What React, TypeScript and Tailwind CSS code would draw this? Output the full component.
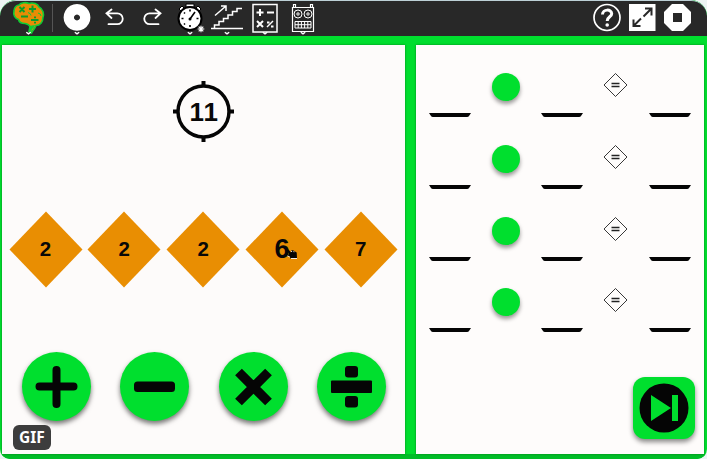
import type { ReactNode } from "react";

const Icon = ({ box, className, children }: { box: string; className: string; children: ReactNode }) => (
  <svg viewBox={box} className={`h-9 shrink-0 ${className}`} fill="none" stroke="#fff" strokeWidth="1.5">
    {children}
  </svg>
);

const Notch = ({ x }: { x: number }) => (
  <path d={`M${x - 2.2} 32.2 l2.2 1.7 2.2 -1.7`} stroke="#fff" strokeWidth="1.4" fill="none" />
);

function Toolbar() {
  return (
    <header className="flex h-9 shrink-0 rounded-t-2xl border-t border-[#bdd0d6] bg-[#282828]">
      <div className="-mt-px flex h-9 w-full">
        <Icon box="10 0 38 36" className="ml-2.5 w-[38px]">
          <path
            d="M14 11 C14 7 17 5 19 5 C21 2.5 26 2 29 3.5 C33 2 38 4 39 7 C43 9 44.5 14 42.8 18 C43 22 40 25.5 36 25.5 C35 29 32.5 30 31.5 33 L29 31.5 L30 26.5 C29 24.5 28 24 25 23.5 C21 23.5 19 22 18.5 19.5 C15 18.5 13 15 14 11 Z"
            fill="#e78c05"
            stroke="#0ecb35"
            strokeWidth="1.6"
          />
          <path
            d="M19.5 7 l5 5 m0 -5 l-5 5 M29 9 h7 m-3.5 -3.5 v7 M21 16.5 h7 M31 20 h7.5 M35 16.5 v1.7 m0 3.6 v1.7"
            stroke="#0c9e2a"
            strokeWidth="2"
          />
          <path d="M28 12.5 q3 1 3 3 M38 13 q3 .5 3 3" stroke="#0ecb35" strokeWidth="1" />
          <path d="M29 26 l6 -1 q-1 3 -3 4 l-1 4 -2 -2 z" fill="#0ecb35" stroke="none" />
          <Notch x={28.5} />
        </Icon>
        <div className="mt-1 ml-1 h-7 w-px bg-[#555]" />
        <Icon box="62 0 30 36" className="ml-[9px] w-[30px]">
          <path
            d="M77 4a13.4 13.4 0 1 0 .01 0zM77 14.5a3 3 0 1 1-.01 0z"
            fill="#fff"
            fillRule="evenodd"
            stroke="none"
          />
          <Notch x={77} />
        </Icon>
        <Icon box="100 0 30 36" className="ml-2 w-[30px]">
          <path d="M111.5 9.5 L106.5 13.3 L111.5 18 M106.5 13.3 H117.3 A5.4 5.4 0 0 1 117.3 24.2 H108.5" strokeWidth="1.8" strokeLinecap="round" />
        </Icon>
        <Icon box="138 0 30 36" className="ml-2 w-[30px]">
          <path d="M155.5 9.5 L160.5 13.3 L155.5 18 M160.5 13.3 H149.7 A5.4 5.4 0 0 0 149.7 24.2 H158.5" strokeWidth="1.8" strokeLinecap="round" />
        </Icon>
        <Icon box="175 0 32 36" className="ml-[7px] w-8">
          <path d="M186 4h8v3h-8zM179 9l3-3 2 2-3 3zM196 8l2-2 3 3-2 2z" fill="#fff" stroke="#000" strokeWidth="1" />
          <circle cx="190" cy="18.5" r="11.5" fill="#fff" stroke="#000" strokeWidth="2" />
          <path d="M190 19 L195 12 M190 9.5v2M190 25v2M181.5 18.5h2M196.5 18.5h2M184 12.5l1 1M184 24.5l1 -1" stroke="#000" strokeWidth="1.6" />
          <circle cx="190" cy="19" r="1.5" fill="#000" stroke="none" />
          <circle cx="201" cy="29" r="3.7" fill="#282828" stroke="none" />
          <path d="M201 25.7v6.6M197.7 29h6.6M198.7 26.7l4.6 4.6M203.3 26.7l-4.6 4.6" strokeWidth="1.1" />
          <Notch x={190} />
        </Icon>
        <Icon box="210 0 34 36" className="ml-[3px] w-[34px]">
          <path d="M211 28.5 H243 M214.5 28.5 V25 H219 V21.5 H223.5 V18.5 H228 V15 H232.5 V11.5 H237 V8.5 H242" />
          <path d="M215 15.5 L226 6 M221 6 H226 V11" />
          <Notch x={227} />
        </Icon>
        <Icon box="251 0 29 36" className="ml-[7px] w-[29px]">
          <rect x="253" y="4.5" width="24" height="27.5" />
          <path d="M256.5 12.5h7M260 9v7M267 12.5h7M257 21l6 6M263 21l-6 6" strokeWidth="2" />
          <path d="M267 27l6 -6" />
          <path d="M267 21.5h2.5v2h-2.5zM271 25.5h2.5v2h-2.5z" fill="#fff" stroke="none" />
          <Notch x={265} />
        </Icon>
        <Icon box="289 0 28 36" className="ml-[9px] w-7">
          <path d="M292.5 7.5h21v24h-21zM293.5 7v-2.5h2v3M310.5 7v-2.5h2v3" strokeWidth="1.2" />
          <circle cx="298" cy="14" r="4" strokeWidth="1" />
          <circle cx="308" cy="14" r="4" strokeWidth="1" />
          <circle cx="298" cy="14" r="1.2" strokeWidth="1" />
          <circle cx="308" cy="14" r="1.2" strokeWidth="1" />
          <path d="M295 21.5h16v6.5h-16zM295 24.7h16M298.2 21.5v6.5M301.4 21.5v6.5M304.6 21.5v6.5M307.8 21.5v6.5" strokeWidth="1" />
          <Notch x={303} />
        </Icon>
        <Icon box="592 0 30 36" className="ml-auto w-[30px]">
          <circle cx="607" cy="17.5" r="13" strokeWidth="1.7" />
          <path d="M602.5 14.5 C602.5 8.8 611.7 8.8 611.7 13.7 C611.7 17 607.2 16.6 607.2 21" strokeWidth="3" />
          <circle cx="607.2" cy="25" r="1.8" fill="#fff" stroke="none" />
        </Icon>
        <Icon box="628 0 28 36" className="ml-1.5 w-7">
          <path d="M629 4h26.5v27h-26.5z" fill="#fff" stroke="none" />
          <path d="M643.5 16.5 L651.5 8.5 M645 8.5 H651.5 V15.5 M641 18.5 L633.5 26 M633.5 19.5 V26 H640.5" stroke="#282828" strokeWidth="2" />
        </Icon>
        <Icon box="663 0 30 36" className="mr-3.5 ml-[7px] w-[30px]">
          <path d="M672 4h11l8 8v11l-8 8h-11l-8-8v-11zM673 13v9h9v-9z" fill="#fff" fillRule="evenodd" stroke="none" />
        </Icon>
      </div>
    </header>
  );
}

function Target() {
  return (
    <div className="relative mx-auto mt-9 flex h-[61px] w-[61px] items-center justify-center">
      <svg viewBox="0 0 61 61" className="absolute inset-0" fill="none" stroke="#050505">
        <circle cx="30.5" cy="30.5" r="25.5" strokeWidth="3.5" />
        <path d="M30.5 0v5M30.5 56v5M0 30.5h5M56 30.5h5" strokeWidth="4" />
      </svg>
      <span className="text-[26px] leading-none font-bold tracking-[-0.5px] [font-kerning:none]">11</span>
    </div>
  );
}

function NumberTile({ value, active }: { value: number; active?: boolean }) {
  return (
    <div className="relative flex h-[77px] w-[74px] items-center justify-center">
      <svg viewBox="0 0 74 77" className="absolute inset-0">
        <path d="M37 0.5 L73.5 38.5 L37 76.5 L0.5 38.5 Z" fill="#e98e02" />
      </svg>
      <span className={`relative leading-none font-bold ${active ? "text-[27px]" : "text-[20.5px]"}`}>{value}</span>
      {active && (
        <svg viewBox="0 0 12 12" className="absolute top-[37px] left-[41px] h-3 w-3">
          <path
            d="M1 2.5 L2.5 1.5 L5 4.5 L5.5 2 L7.5 2.5 L9 3.5 L10.7 4.5 L11 10.5 H4.5 L3.8 8.8 L0.8 7.5 L1.2 6.3 L3.2 6.6 Z"
            fill="#050505"
          />
          <path d="M5 10.5H11M1.5 7.8L3.8 9M5.3 2.8L5.8 4M7.8 3.2L8 4.2" stroke="#fff" strokeWidth="0.9" fill="none" />
        </svg>
      )}
    </div>
  );
}

const operators: ReactNode[] = [
  <path key="plus" d="M34.5 18v34M17.5 34.5h34" strokeWidth="8" strokeLinecap="round" />,
  <rect key="minus" x="14" y="29.5" width="41" height="10.5" rx="3.5" fill="#050505" stroke="none" />,
  <path key="times" d="M19.5 20l30 30M49.5 20l-30 30" strokeWidth="9.5" />,
  <g key="divide" fill="#050505" stroke="none">
    <rect x="14" y="28.5" width="41" height="12.5" rx="1" />
    <rect x="28" y="14" width="13" height="11.5" rx="3" />
    <rect x="28" y="44" width="13" height="11.5" rx="3" />
  </g>,
];

function Step() {
  return (
    <div className="flex h-[71.8px] items-start pl-[13px]">
      <Blank />
      <div className="ml-[21px] h-7 w-7 rounded-full bg-[#00df2e] shadow-[0_3px_4px_#0006]" />
      <Blank className="ml-[21px]" />
      <svg viewBox="0 0 24 24" className="ml-5 h-6 w-6" fill="none" stroke="#222">
        <path d="M12.5 0.5 L24 12 L12.5 23.5 L1 12 Z" strokeWidth="0.9" />
        <path d="M8.5 10.5h8M8.5 13.5h8" strokeWidth="1.4" />
      </svg>
      <Blank className="ml-[22px]" />
    </div>
  );
}

function Blank({ className = "" }: { className?: string }) {
  return (
    <svg viewBox="0 0 42 4" className={`mt-10 h-1 w-[42px] shrink-0 ${className}`}>
      <path d="M0 0H42L40 3Q39.5 4 38 4H4Q2.5 4 2 3Z" fill="#050505" />
    </svg>
  );
}

export default function App() {
  return (
    <div className="h-[459px] w-[707px] bg-[#edf4f3] font-['Liberation_Sans',Arial,sans-serif] text-[#080808]">
      <div className="flex h-full flex-col overflow-hidden rounded-t-2xl rounded-b-[10px] bg-[#00de2e]">
        <Toolbar />
        <main className="flex flex-1 gap-[11px] border-b-[5px] border-[#00bd27] pt-[9px] pr-[3px] pl-0.5">
          <section className="relative flex w-[403px] shrink-0 flex-col bg-[#fdfbfa] shadow-[0_0_2px_#087d1c]">
            <Target />
            <div className="mt-[69px] ml-[6.5px] flex gap-[4.8px]">
              <NumberTile value={2} />
              <NumberTile value={2} />
              <NumberTile value={2} />
              <NumberTile value={6} active />
              <NumberTile value={7} />
            </div>
            <div className="mt-16 ml-[19.5px] flex gap-[29.5px]">
              {operators.map((mark, i) => (
                <button key={i} className="h-[69px] w-[69px] rounded-full bg-[#00df2e] shadow-[0_3px_5px_#0008]">
                  <svg viewBox="0 0 69 69" className="h-full w-full" fill="none" stroke="#050505">
                    {mark}
                  </svg>
                </button>
              ))}
            </div>
            <div
              className="absolute bottom-1 left-[11px] flex h-[25px] w-[38px] items-center justify-center rounded-md bg-[#3d3d3d] font-['Noto_Sans',sans-serif] text-[15.5px] font-bold text-white"
            >
              GIF
            </div>
          </section>
          <section className="flex flex-1 flex-col bg-[#fefcfb] pt-7 shadow-[0_0_2px_#087d1c]">
            <Step />
            <Step />
            <Step />
            <Step />
            <button className="mt-auto mr-[9px] mb-[15.5px] flex h-[62px] w-[62px] items-center justify-center self-end rounded-[12px] bg-[#00df2e] shadow-[0_3px_5px_#0007]">
              <svg viewBox="0 0 50 50" className="h-[50px] w-[50px]">
                <circle cx="25" cy="25" r="24.5" fill="#050505" />
                <path d="M12 12L32 25L12 38ZM33 12H39V38H33Z" fill="#00df2e" />
              </svg>
            </button>
          </section>
        </main>
      </div>
    </div>
  );
}
